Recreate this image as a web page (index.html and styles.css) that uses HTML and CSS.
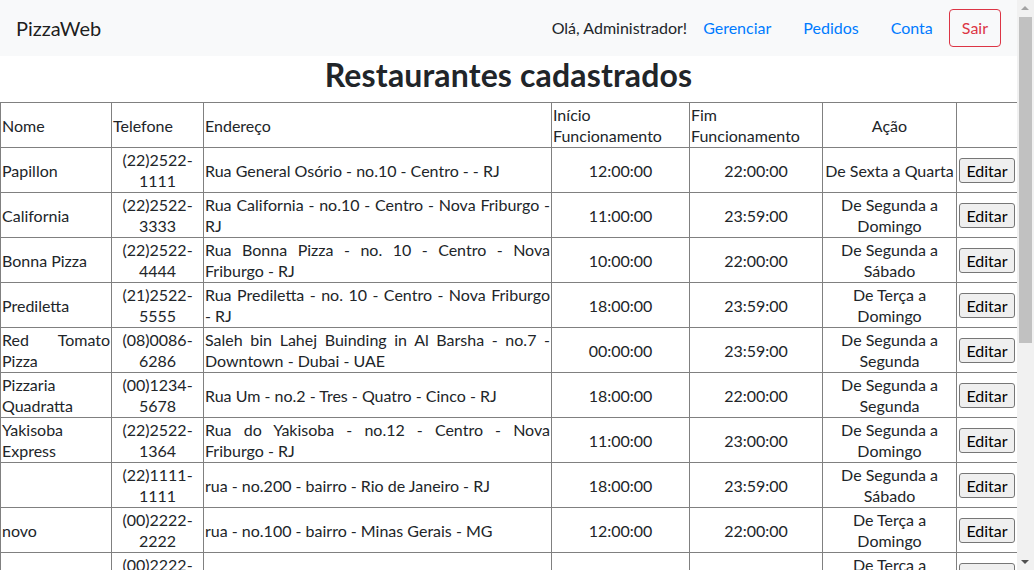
FILE: index.html
```html
<!DOCTYPE html>
<html lang="pt-BR">
<head>
<meta charset="utf-8">
<title>PizzaWeb</title>
<link rel="stylesheet" href="styles.css">
</head>
<body>
<div class="viewport">
  <div class="page">
    <nav class="navbar">
      <a class="brand" href="#">PizzaWeb</a>
      <div class="nav-right">
        <span class="greet">Olá, Administrador!</span>
        <a class="nav-link" href="#">Gerenciar</a>
        <a class="nav-link" href="#">Pedidos</a>
        <a class="nav-link" href="#">Conta</a>
        <button class="btn-sair">Sair</button>
      </div>
    </nav>
    <h1 class="title">Restaurantes cadastrados</h1>
    <table class="rest-table">
      <colgroup>
        <col class="c-nome"><col class="c-tel"><col class="c-end"><col class="c-ini"><col class="c-fim"><col class="c-acao"><col class="c-btn">
      </colgroup>
      <thead>
        <tr>
          <th>Nome</th>
          <th>Telefone</th>
          <th>Endereço</th>
          <th>Início Funcionamento</th>
          <th>Fim Funcionamento</th>
          <th class="center">Ação</th>
          <th></th>
        </tr>
      </thead>
      <tbody>
        <tr><td class="just">Papillon</td><td class="center">(22)2522-1111</td><td class="just">Rua General Osório - no.10 - Centro - - RJ</td><td class="center">12:00:00</td><td class="center">22:00:00</td><td class="center">De Sexta a Quarta</td><td class="btn-cell"><button class="btn-edit">Editar</button></td></tr>
        <tr><td class="just">California</td><td class="center">(22)2522-3333</td><td class="just">Rua California - no.10 - Centro - Nova Friburgo - RJ</td><td class="center">11:00:00</td><td class="center">23:59:00</td><td class="center">De Segunda a Domingo</td><td class="btn-cell"><button class="btn-edit">Editar</button></td></tr>
        <tr><td class="just">Bonna Pizza</td><td class="center">(22)2522-4444</td><td class="just">Rua Bonna Pizza - no. 10 - Centro - Nova Friburgo - RJ</td><td class="center">10:00:00</td><td class="center">22:00:00</td><td class="center">De Segunda a Sábado</td><td class="btn-cell"><button class="btn-edit">Editar</button></td></tr>
        <tr><td class="just">Prediletta</td><td class="center">(21)2522-5555</td><td class="just">Rua Prediletta - no. 10 - Centro - Nova Friburgo <span class="nowrap">- RJ</span></td><td class="center">18:00:00</td><td class="center">23:59:00</td><td class="center">De Terça a Domingo</td><td class="btn-cell"><button class="btn-edit">Editar</button></td></tr>
        <tr><td class="just">Red Tomato Pizza</td><td class="center">(08)0086-6286</td><td class="just">Saleh bin Lahej Buinding in Al Barsha - no.7 - Downtown - Dubai - UAE</td><td class="center">00:00:00</td><td class="center">23:59:00</td><td class="center">De Segunda a Segunda</td><td class="btn-cell"><button class="btn-edit">Editar</button></td></tr>
        <tr><td class="just">Pizzaria Quadratta</td><td class="center">(00)1234-5678</td><td class="just">Rua Um - no.2 - Tres - Quatro - Cinco - RJ</td><td class="center">18:00:00</td><td class="center">22:00:00</td><td class="center">De Segunda a Segunda</td><td class="btn-cell"><button class="btn-edit">Editar</button></td></tr>
        <tr><td class="just">Yakisoba Express</td><td class="center">(22)2522-1364</td><td class="just">Rua do Yakisoba - no.12 - Centro - Nova <span class="nowrap">Friburgo - RJ</span></td><td class="center">11:00:00</td><td class="center">23:00:00</td><td class="center">De Segunda a Domingo</td><td class="btn-cell"><button class="btn-edit">Editar</button></td></tr>
        <tr><td class="just"></td><td class="center">(22)1111-1111</td><td class="just">rua - no.200 - bairro - Rio de Janeiro - RJ</td><td class="center">18:00:00</td><td class="center">23:59:00</td><td class="center">De Segunda a Sábado</td><td class="btn-cell"><button class="btn-edit">Editar</button></td></tr>
        <tr><td class="just">novo</td><td class="center">(00)2222-2222</td><td class="just">rua - no.100 - bairro - Minas Gerais - MG</td><td class="center">12:00:00</td><td class="center">22:00:00</td><td class="center">De Terça a Domingo</td><td class="btn-cell"><button class="btn-edit">Editar</button></td></tr>
        <tr><td class="just"></td><td class="center">(00)2222-2222</td><td class="just">rua - no.100 - bairro - Minas Gerais - MG</td><td class="center">12:00:00</td><td class="center">22:00:00</td><td class="center">De Terça a Domingo</td><td class="btn-cell"><button class="btn-edit">Editar</button></td></tr>
      </tbody>
    </table>
  </div>
  <div class="scrollbar">
    <div class="sb-arrow sb-up"></div>
    <div class="sb-track"><div class="sb-thumb"></div></div>
    <div class="sb-arrow sb-down"></div>
  </div>
</div>
</body>
</html>
```

FILE: styles.css
```css
* { box-sizing: border-box; }
html, body {
  margin: 0;
  padding: 0;
  height: 570px;
  overflow: hidden;
  background: #fff;
}
body {
  font-family: "Segoe UI", "Lato", "Noto Sans", sans-serif;
  font-size: 16px;
  line-height: 1.5;
  color: #212529;
}
.viewport {
  display: flex;
  height: 570px;
}
.page {
  flex: 1;
  min-width: 0;
  overflow: hidden;
}
.navbar {
  height: 56px;
  background: #f8f9fa;
  display: flex;
  align-items: center;
  justify-content: space-between;
  padding: 0 16px;
}
.brand {
  font-size: 20px;
  color: rgba(0,0,0,.9);
  text-decoration: none;
  line-height: 30px;
}
.nav-right {
  display: flex;
  align-items: center;
}
.greet {
  color: #212529;
}
.nav-link {
  color: #007bff;
  text-decoration: none;
  padding: 8px 16px;
}
.btn-sair {
  font-family: inherit;
  font-size: 16px;
  line-height: 24px;
  padding: 6px 12px;
  border: 1px solid #dc3545;
  border-radius: 4px;
  color: #dc3545;
  background: transparent;
}
.title {
  margin: 0 0 8px;
  font-size: 32px;
  font-weight: 700;
  line-height: 1.2;
  letter-spacing: 0.15px;
  text-align: center;
  color: #212529;
}
.rest-table {
  width: 1017px;
  table-layout: fixed;
  border-collapse: collapse;
  line-height: 21px;
}
.c-nome { width: 111px; }
.c-tel { width: 92px; }
.c-end { width: 348px; }
.c-ini { width: 138px; }
.c-fim { width: 133px; }
.c-acao { width: 134px; }
.c-btn { width: 61px; }
.rest-table th,
.rest-table td {
  border: 1px solid #808080;
  padding: 1px;
  vertical-align: middle;
  font-weight: 400;
  height: 45px;
}
.rest-table th { text-align: left; }
.rest-table .center { text-align: center; }
.rest-table .just { text-align: justify; }
.nowrap { white-space: nowrap; }
.btn-cell { text-align: center; }
.btn-edit {
  font-family: inherit;
  font-size: 16px;
  line-height: 21px;
  color: #000;
  background: #efefef;
  border: 1px solid #767676;
  border-radius: 3px;
  padding: 1px 6px;
}
.scrollbar {
  width: 17px;
  flex: none;
  background: #f1f1f1;
  display: flex;
  flex-direction: column;
}
.sb-arrow {
  height: 17px;
  flex: none;
  position: relative;
}
.sb-up::after, .sb-down::after {
  content: "";
  position: absolute;
  left: 4px;
  width: 0;
  height: 0;
  border-left: 4px solid transparent;
  border-right: 4px solid transparent;
}
.sb-up::after { top: 6px; border-bottom: 4px solid #a3a3a3; }
.sb-down::after { top: 7px; border-top: 4px solid #505050; }
.sb-track {
  flex: 1;
  padding: 0 2px;
}
.sb-thumb {
  height: 326px;
  background: #c1c1c1;
}
```
